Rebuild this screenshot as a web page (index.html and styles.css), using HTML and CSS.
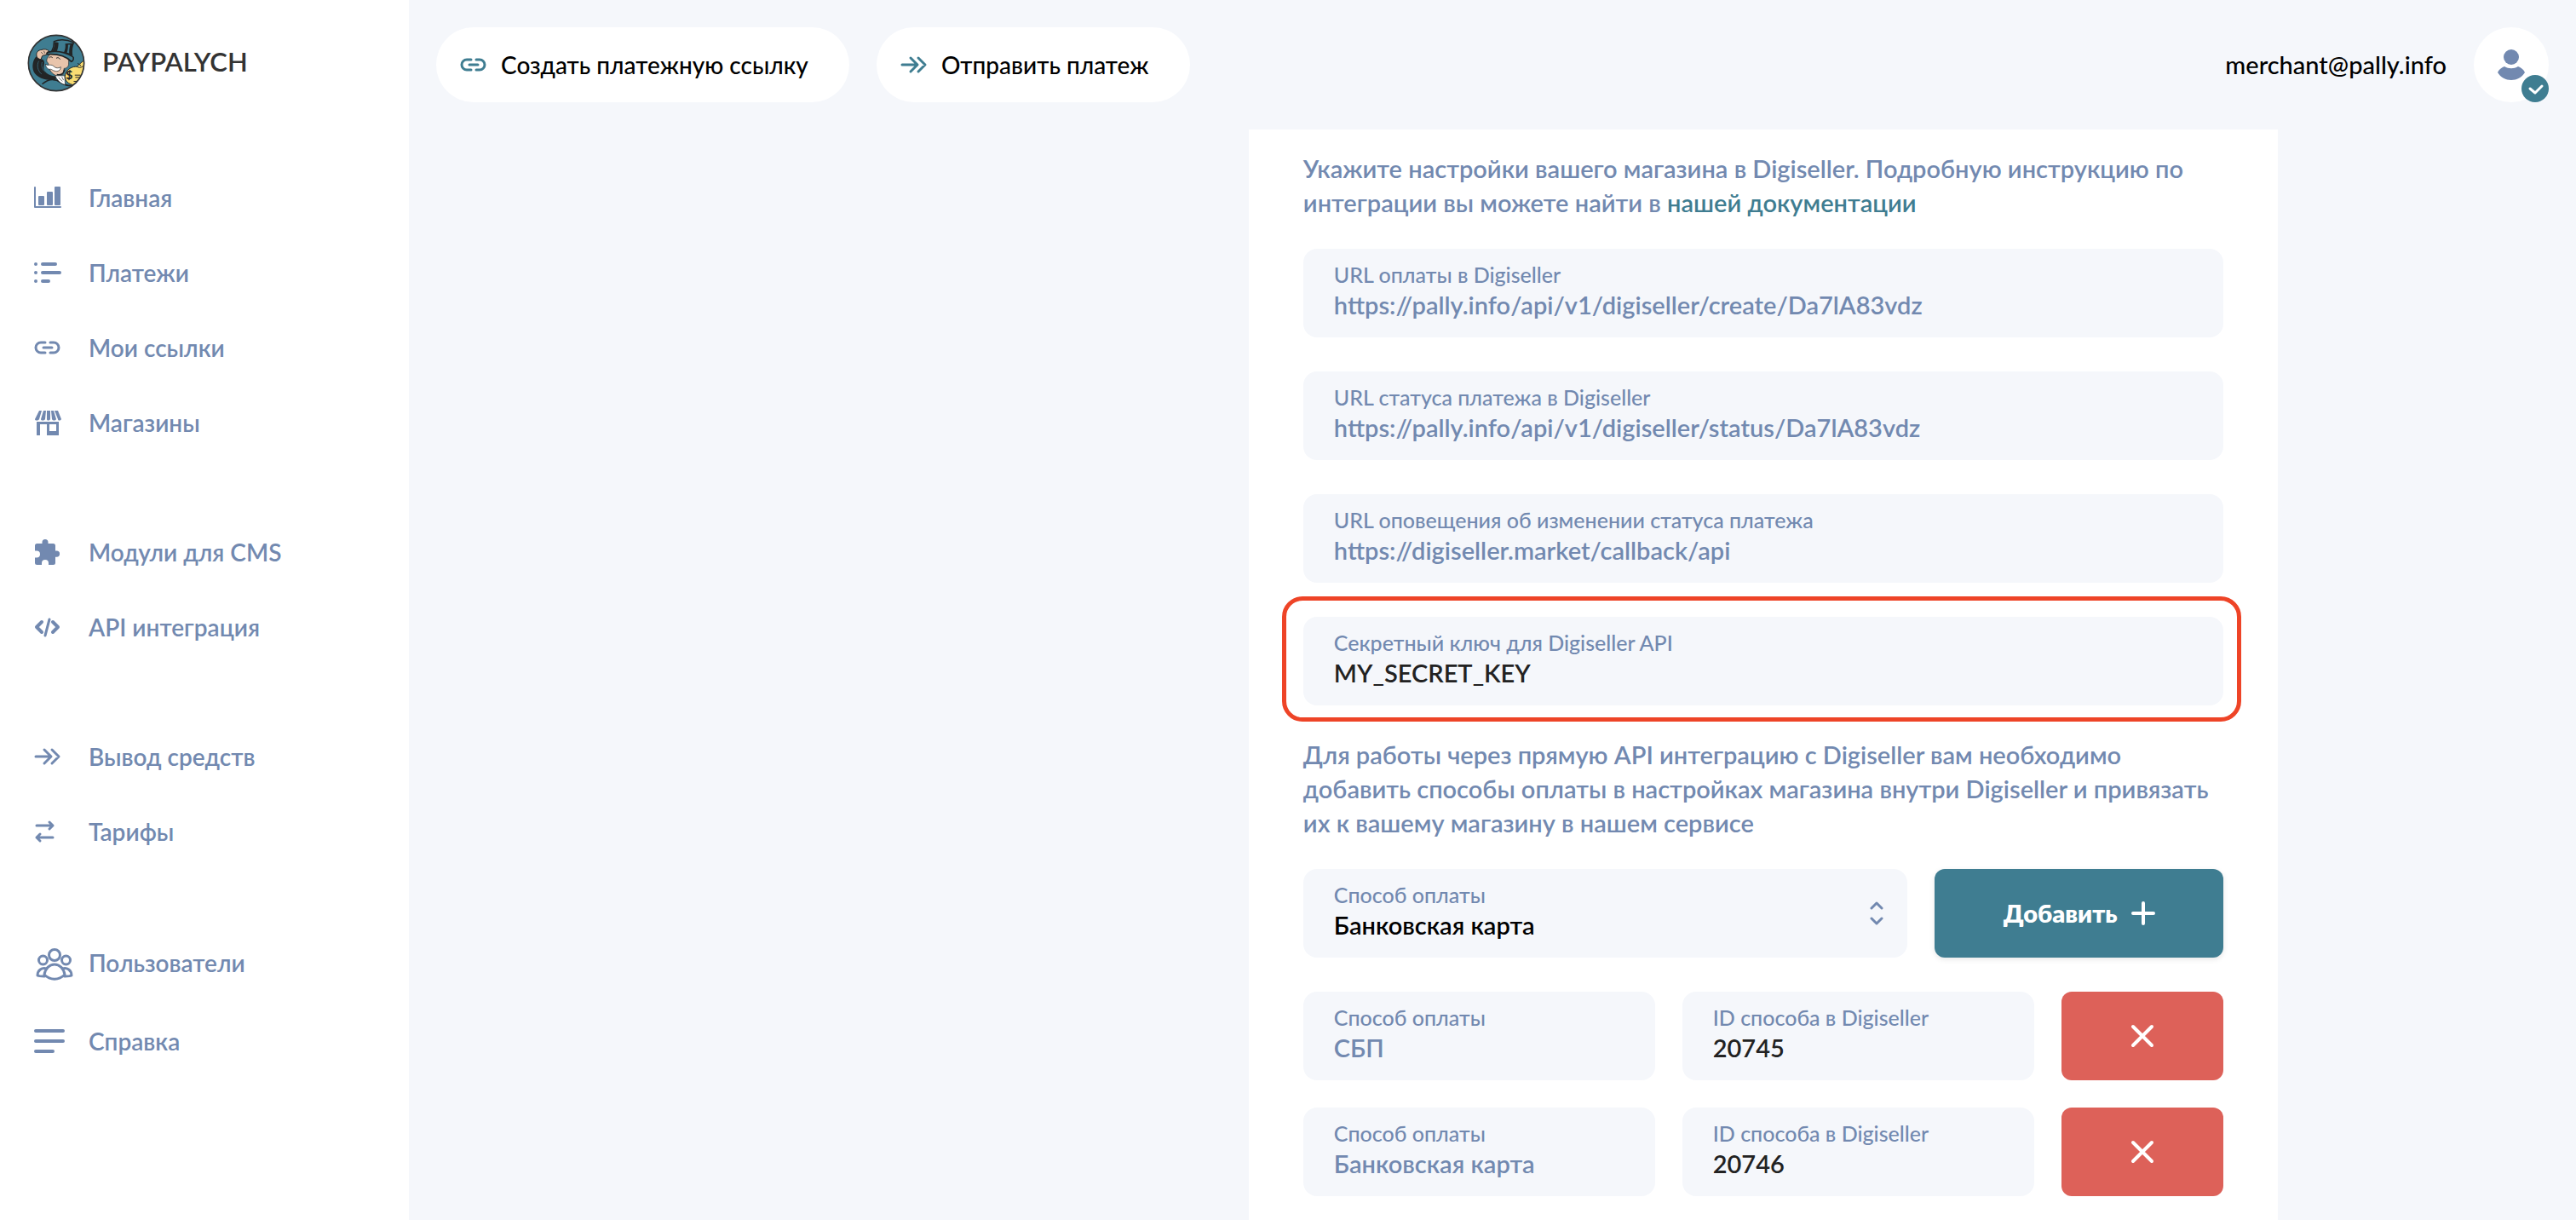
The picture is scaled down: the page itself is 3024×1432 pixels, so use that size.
FILE: index.html
```html
<!DOCTYPE html>
<html lang="ru">
<head>
  <meta charset="UTF-8" />
  <meta name="viewport" content="width=device-width, initial-scale=1.0"/>
  <title>Настройки магазина | PAYPALYCH</title>
  <link rel="stylesheet" href="styles.css">
</head>
<body>

<aside class="sidebar">
  <a href="#" class="logo">
    <svg class="logo-img" viewBox="36 28 204 206" aria-hidden="true">
      <defs><clipPath id="logoClip"><circle cx="138" cy="131" r="99"/></clipPath></defs>
      <circle cx="138" cy="131" r="100" fill="#3f7d91"/>
      <g clip-path="url(#logoClip)">
        <!-- arm and coat -->
        <path d="M66 108c-14 16-16 44-4 60 16 20 44 24 72 24l8-14c-24 0-44-10-48-26-2-12 6-22-2-32z" fill="#222526"/>
        <path d="M76 124c-8 14-4 36 10 46M88 128c-4 12 0 26 10 34" fill="none" stroke="#3f7d91" stroke-width="2"/>
        <path d="M88 206c20-18 44-22 66-6 20 14 34 14 50 10" fill="none" stroke="#222526" stroke-width="5"/>
        <!-- hand -->
        <path d="M68 104c-2-10 6-20 18-20 8-4 20-2 26 4l-6 12-18 6-4 12c-8 0-16-6-16-14z" fill="#e8c4ab" stroke="#222526" stroke-width="3"/>
        <path d="M84 92l8 8M94 88l4 9" stroke="#222526" stroke-width="2"/>
        <!-- face -->
        <path d="M116 96c-2 10-12 16-12 26 0 6 6 8 6 12 0 20 14 38 30 42l22-4 4-22c10 0 18-8 16-20l2-24z" fill="#e8c4ab" stroke="#222526" stroke-width="2"/>
        <path d="M112 113c4-5 9-5 13-1M138 114c5-4 11-2 14 4" fill="none" stroke="#222526" stroke-width="3"/>
        <path d="M140 172c14 4 24-2 28-18" fill="none" stroke="#222526" stroke-width="5"/>
        <!-- moustache -->
        <path d="M100 134c6 8 12 2 18 4 8-2 12 8 20 10 6 1 12 0 16-3 0 12-10 18-22 14-8-2-10-6-14-6-8 2-18-6-18-19z" fill="#fff" stroke="#222526" stroke-width="2"/>
        <!-- collar -->
        <path d="M134 176l34 0 2 32c-14-2-28-14-36-32z" fill="#fff" stroke="#222526" stroke-width="2"/>
        <path d="M146 182l14 14M158 180l6 12" stroke="#222526" stroke-width="2"/>
        <!-- hat -->
        <path d="M130 54c20-8 48-6 70 4-6 14-8 28-6 44l-72-14c6-10 8-22 8-34z" fill="#3f7d91" stroke="#222526" stroke-width="4"/>
        <path d="M170 62l30-2c-6 14-8 28-6 42l-30-6c6-12 8-22 6-34zM132 56l14 2c0 12-2 22-6 32l-16-2c6-10 8-20 8-32z" fill="#222526"/>
        <path d="M180 66l8 0c-4 12-4 20-4 30l-8-2c4-10 4-20 4-28z" fill="#3f7d91"/>
        <path d="M110 92c30-6 60 0 86 16 6 4 4 14-4 18-20-20-48-28-84-26-6 0-4-6 2-8z" fill="#3f7d91" stroke="#222526" stroke-width="5"/>
        <!-- money bag -->
        <path d="M172 168c6-16 24-26 40-24 8-8 14-16 26-22v70c-14 18-40 22-56 10-12-8-16-22-10-34z" fill="#f8dc72" stroke="#222526" stroke-width="3"/>
        <path d="M212 144c6 4 14 4 22-2M214 132l12 8" fill="none" stroke="#222526" stroke-width="3"/>
        <path d="M204 174h20M206 182h26M200 196h22" stroke="#222526" stroke-width="3"/>
        <text x="172" y="188" class="logo-sign">$</text>
      </g>
      <circle cx="138" cy="131" r="99" fill="none" stroke="#333" stroke-width="5"/>
    </svg>
    <span>PAYPALYCH</span>
  </a>

  <nav class="menu">
    <ul>
      <li><a href="#">
        <svg width="32" height="32" viewBox="0 0 32 32"><path d="M1 4v23h30" fill="none" stroke="currentColor" stroke-width="2" stroke-linecap="round" stroke-linejoin="round"/><rect x="5" y="14" width="7" height="11" rx="1"/><rect x="15" y="9" width="7" height="16" rx="1"/><rect x="24" y="3" width="7" height="22" rx="1"/></svg>
        Главная</a></li>
      <li><a href="#">
        <svg width="32" height="32" viewBox="0 0 32 32" class="line"><path d="M2 6h0M10 6h15M2 16h0M10 16h20M2 26h0M10 26h7" stroke-width="4"/></svg>
        Платежи</a></li>
      <li><a href="#">
        <svg width="32" height="32" viewBox="0 0 32 32" class="line"><path d="M13 10H8a6 6 0 0 0 0 12h5M19 10h4a6 6 0 0 1 0 12h-4M11 16h10" stroke-width="3"/></svg>
        Мои ссылки</a></li>
      <li><a href="#">
        <svg width="32" height="32" viewBox="0 0 32 32"><path d="M6 2h3L6 12c-1 2-5 2-5 0zM11 2h3l-1 10c-1 2-5 2-5 0zM15 2h4v10c-1 2-4 2-4 0zM20 2h3l3 10c-1 2-4 2-5 0zM24 2h4l4 10c-1 2-4 2-4 0z"/><path fill-rule="evenodd" d="M3 15h26v15c0 1 0 1-1 1H16c-1 0-1 0-1-1V18H7v12c0 1 0 1-1 1H4c-1 0-1 0-1-1zM18 18v8h8v-8z"/></svg>
        Магазины</a></li>
    </ul>
    <ul>
      <li><a href="#">
        <svg width="32" height="32" viewBox="0 0 32 32"><path d="M1 8.500a2.500 2.500 0 0 1 2.500-2.500H9.500V4.500a3.500 3.500 0 0 1 7 0V6H22.500a2.500 2.500 0 0 1 2.500 2.500V14.500h1.500a3.600 3.600 0 0 1 0 7.200H25V28.500a2.500 2.500 0 0 1-2.500 2.500H17V29a4 4 0 0 0-8 0v2H3.500A2.500 2.500 0 0 1 1 28.500V22.500h2a4 4 0 0 0 0-8H1z"/></svg>
        Модули для CMS</a></li>
      <li><a href="#">
        <svg width="32" height="32" viewBox="0 0 32 32" class="line"><path d="M9 10l-6 6 6 6M22 10l6 6-6 6" stroke-width="4"/><path d="M18 7l-5 19" stroke-width="3"/></svg>
        API интеграция</a></li>
    </ul>
    <ul>
      <li><a href="#">
        <svg width="32" height="32" viewBox="0 0 32 32" class="line"><path d="M2 16h17M12 8l8 8-8 8M21 8l8 8-8 8" stroke-width="3"/></svg>
        Вывод средств</a></li>
      <li><a href="#">
        <svg width="32" height="32" viewBox="0 0 32 32" class="line"><path d="M3 9h19M18 5l4 4-4 4M22 23H3M7 19l-4 4 4 4" stroke-width="3"/></svg>
        Тарифы</a></li>
    </ul>
    <ul>
      <li><a href="#">
        <svg width="48" height="44" viewBox="0 0 48 44" class="line"><g stroke-width="3"><circle cx="24" cy="13" r="6.500"/><circle cx="10.500" cy="19" r="5"/><circle cx="37.500" cy="19" r="5"/><path d="M12 36c1-7 6-12 12-12s11 5 12 12c-7 7-17 7-24 0zM15 29c-6-2-11 2-11 8 2 1 5 1 8 1M33 29c6-2 11 2 11 8-2 1-5 1-8 1"/></g></svg>
        Пользователи</a></li>
      <li><a href="#">
        <svg width="48" height="44" viewBox="0 0 48 44" class="line"><path d="M2 10h32M2 22h32M2 34h20" stroke-width="4"/></svg>
        Справка</a></li>
    </ul>
  </nav>
</aside>

<div class="page">
  <header class="header">
    <button type="button" class="pill">
      <svg width="32" height="32" viewBox="0 0 32 32" class="line"><path d="M13 10H8a6 6 0 0 0 0 12h5M19 10h4a6 6 0 0 1 0 12h-4M11 16h10" stroke-width="3"/></svg>
      Создать платежную ссылку
    </button>
    <button type="button" class="pill">
      <svg width="32" height="32" viewBox="0 0 32 32" class="line"><path d="M2 16h17M12 8l8 8-8 8M21 8l8 8-8 8" stroke-width="3"/></svg>
      Отправить платеж
    </button>
    <div class="user">
      <span>merchant@pally.info</span>
      <button type="button" class="avatar" aria-label="Профиль">
        <svg width="32" height="36" viewBox="0 0 32 36"><circle cx="16" cy="9" r="9"/><path d="M0 27c2-4 5-6 8-7 5 3 11 3 16 0 3 1 6 3 8 7-7 12-25 12-32 0z"/></svg>
        <svg class="badge" width="32" height="32" viewBox="0 0 32 32"><circle cx="16" cy="16" r="16" fill="#3f7d91"/><path d="M10 16l6 5 8-8" fill="none" stroke="#fff" stroke-width="3" stroke-linecap="round" stroke-linejoin="round"/></svg>
      </button>
    </div>
  </header>

  <main class="content">
    <form class="card">
      <p class="text">Укажите настройки вашего магазина в Digiseller. Подробную инструкцию по интеграции вы можете найти в <a href="#">нашей документации</a></p>

      <div class="field">
        <label for="payUrl">URL оплаты в Digiseller</label>
        <input type="text" id="payUrl" value="https://pally.info/api/v1/digiseller/create/Da7lA83vdz" disabled />
      </div>
      <div class="field">
        <label for="statusUrl">URL статуса платежа в Digiseller</label>
        <input type="text" id="statusUrl" value="https://pally.info/api/v1/digiseller/status/Da7lA83vdz" disabled />
      </div>
      <div class="field">
        <label for="callbackUrl">URL оповещения об изменении статуса платежа</label>
        <input type="text" id="callbackUrl" value="https://digiseller.market/callback/api" disabled />
      </div>
      <div class="field highlight">
        <label for="secretKey">Секретный ключ для Digiseller API</label>
        <input type="text" id="secretKey" value="MY_SECRET_KEY" />
      </div>

      <p class="text">Для работы через прямую API интеграцию с Digiseller вам необходимо добавить способы оплаты в настройках магазина внутри Digiseller и привязать их к вашему магазину в нашем сервисе</p>

      <div class="row add-row">
        <div class="field select-field">
          <label for="method">Способ оплаты</label>
          <select id="method">
            <option>Банковская карта</option>
            <option>СБП</option>
          </select>
          <svg class="chevrons line" width="16" height="28" viewBox="0 0 16 28"><path d="M2 8l6-6 6 6M2 20l6 6 6-6" stroke-width="3"/></svg>
        </div>
        <button type="button" class="btn btn-add">
          Добавить
          <svg width="28" height="28" viewBox="0 0 28 28" class="line"><path d="M14 2v24M2 14h24" stroke-width="4"/></svg>
        </button>
      </div>

      <div class="row">
        <div class="field">
          <label for="method1">Способ оплаты</label>
          <input type="text" id="method1" value="СБП" disabled />
        </div>
        <div class="field">
          <label for="id1">ID способа в Digiseller</label>
          <input type="text" id="id1" value="20745" />
        </div>
        <button type="button" class="btn btn-delete" aria-label="Удалить">
          <svg width="28" height="28" viewBox="0 0 28 28" class="line"><path d="M3 3l22 22M25 3L3 25" stroke-width="4"/></svg>
        </button>
      </div>
      <div class="row">
        <div class="field">
          <label for="method2">Способ оплаты</label>
          <input type="text" id="method2" value="Банковская карта" disabled />
        </div>
        <div class="field">
          <label for="id2">ID способа в Digiseller</label>
          <input type="text" id="id2" value="20746" />
        </div>
        <button type="button" class="btn btn-delete" aria-label="Удалить">
          <svg width="28" height="28" viewBox="0 0 28 28" class="line"><path d="M3 3l22 22M25 3L3 25" stroke-width="4"/></svg>
        </button>
      </div>
    </form>
  </main>
</div>

</body>
</html>
```

FILE: styles.css
```css
* {
  box-sizing: border-box;
}

body {
  font-family: Lato, 'Open Sans', sans-serif;
  font-size: 29px;
  font-weight: 600;
  line-height: 40px;
  color: #000;
  background: #f5f7fb;
  margin: 0;
  display: flex;
  min-height: 100vh;
}

button,
input,
select {
  font: inherit;
  border: none;
  margin: 0;
}

button {
  cursor: pointer;
}

svg {
  fill: currentColor;
  flex-shrink: 0;
}

.line {
  fill: none;
  stroke: currentColor;
  stroke-linecap: round;
  stroke-linejoin: round;
}

/* Sidebar */

.sidebar {
  width: 480px;
  flex-shrink: 0;
  background: #fff;
}

.logo {
  display: flex;
  align-items: center;
  gap: 20px;
  padding: 40px 32px 0;
  color: #333;
  font-size: 31px;
  text-decoration: none;
}

.logo span {
  padding-bottom: 4px;
}

.logo-img {
  width: 68px;
  height: 68px;
}

.logo-sign {
  font-size: 42px;
  font-weight: 900;
  fill: #222526;
}

.menu {
  display: flex;
  flex-direction: column;
  gap: 64px;
  padding-top: 80px;
}

.menu ul {
  list-style: none;
  margin: 0;
  padding: 0;
}

.menu a {
  display: flex;
  align-items: center;
  gap: 32px;
  padding: 24px 40px;
  color: #7289b0;
  font-size: 28px;
  text-decoration: none;
}

.menu ul:last-child a {
  gap: 16px;
}

/* Header */

.page {
  flex: 1;
  min-width: 0;
  display: flex;
  flex-direction: column;
}

.header {
  display: flex;
  align-items: center;
  gap: 32px;
  padding: 32px;
  font-weight: 500;
}

.pill {
  display: flex;
  align-items: center;
  gap: 16px;
  height: 88px;
  padding: 0 48px 0 28px;
  border-radius: 44px;
  background: #fff;
  color: #000;
  font-size: 28px;
}

.pill svg {
  color: #3f7d91;
}

.user {
  display: flex;
  align-items: center;
  gap: 32px;
  margin-left: auto;
}

.avatar {
  position: relative;
  display: flex;
  align-items: center;
  justify-content: center;
  width: 88px;
  height: 88px;
  padding: 0;
  border-radius: 50%;
  background: #fff;
  color: #7289b0;
}

.badge {
  position: absolute;
  right: 0;
  bottom: 0;
}

/* Shop settings */

.content {
  flex: 1;
  display: grid;
  grid-template-columns: 15fr 19fr 5fr;
  padding: 0 32px;
}

.card {
  grid-column: 2;
  display: flex;
  flex-direction: column;
  gap: 32px;
  padding: 26px 64px;
  background: #fff;
}

.text {
  margin: 0 0 2px;
  color: #7289b0;
}

.text a {
  color: #3f7d91;
  text-decoration: none;
}

.field {
  position: relative;
  padding: 14px 36px 18px;
  border-radius: 16px;
  background: #f5f7fb;
}

.field + .field,
.add-row + .row {
  margin-top: 8px;
}

.field + .text {
  margin-top: 6px;
}

.field label {
  display: block;
  color: #7289b0;
  font-size: 25px;
  font-weight: 500;
  line-height: 32px;
}

.field input,
.field select {
  display: block;
  width: 100%;
  height: 40px;
  padding: 0;
  background: transparent;
  color: #222;
  outline: none;
}

.field select {
  appearance: none;
  color: #000;
}

.field input:disabled {
  color: #7289b0;
}

.chevrons {
  position: absolute;
  top: 38px;
  right: 28px;
  color: #7289b0;
  pointer-events: none;
}

.highlight::after {
  content: '';
  position: absolute;
  inset: -24px -21px -19px -25px;
  border: 5px solid #ee4427;
  border-radius: 24px;
  pointer-events: none;
}

.row {
  display: grid;
  grid-template-columns: repeat(15, 1fr);
  gap: 32px;
}

.row .field {
  grid-column: span 6;
  margin-top: 0;
}

.row .select-field {
  grid-column: span 10;
}

.btn {
  display: flex;
  align-items: center;
  justify-content: center;
  gap: 16px;
  border-radius: 12px;
  color: #fff;
}

.btn-add {
  grid-column: span 5;
  background: #3f7d91;
  font-weight: 800;
  box-shadow: 0 2px 6px rgba(0, 0, 0, 0.1);
}

.btn-delete {
  grid-column: span 3;
  background: #dd6159;
}
```
